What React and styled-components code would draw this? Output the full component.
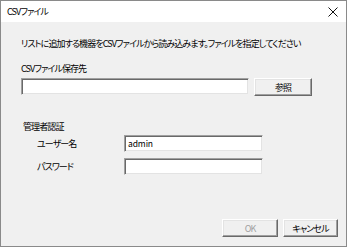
import React from "react";
import styled, { createGlobalStyle } from "styled-components";

const GlobalStyle = createGlobalStyle`
  html, body {
    margin: 0;
    padding: 0;
    background: #f0f0f0;
  }
  * {
    box-sizing: border-box;
  }
`;

const Window = styled.div`
  width: 347px;
  height: 247px;
  display: flex;
  flex-direction: column;
  border: 1px solid #8a8a8a;
  background: #f0f0f0;
  font-family: "Noto Sans CJK JP", "Noto Sans", sans-serif;
  font-size: 9px;
  letter-spacing: -0.9px;
  font-feature-settings: "palt";
  color: #000;
`;

const TitleBar = styled.div`
  height: 21px;
  flex: none;
  display: flex;
  align-items: center;
  justify-content: space-between;
  padding: 0 8px 0 6px;
  background: #fff;
`;

const Title = styled.span`
  line-height: 12px;
`;

const Body = styled.div`
  flex: 1;
  display: flex;
  flex-direction: column;
  padding: 16px 8px 8px 20px;
`;

const Text = styled.div`
  line-height: 12px;
  height: 12px;
  margin-top: ${(p) => p.$top || 0}px;
  margin-left: ${(p) => p.$left || 0}px;
  white-space: nowrap;
`;

const PathRow = styled.div`
  display: flex;
  align-items: flex-start;
  gap: 5px;
  margin-top: 3px;
`;

const Field = styled.div`
  width: ${(p) => p.$width}px;
  height: 17px;
  background: #fff;
  border-style: solid;
  border-width: 1px;
  border-color: #a0a0a0 #f0f0f0 #f0f0f0 #a0a0a0;
  box-shadow: inset 1px 1px 0 #696969, inset -1px -1px 0 #e3e3e3;
  padding: 1px 3px;
  line-height: 13px;
  font-size: 8.5px;
  letter-spacing: -0.1px;
`;

const Button = styled.div`
  width: ${(p) => p.$width}px;
  height: 18px;
  display: flex;
  align-items: center;
  justify-content: center;
  background: #f0f0f0;
  border-style: solid;
  border-width: 1px;
  border-color: #ffffff #696969 #696969 #ffffff;
  box-shadow: inset -1px -1px 0 #a0a0a0, inset 1px 1px 0 #e3e3e3;
  color: ${(p) => (p.$disabled ? "#a0a0a0" : "#000")};
`;

const Group = styled.div`
  display: flex;
  flex-direction: column;
  margin-top: 25px;
`;

const FormRow = styled.div`
  display: flex;
  align-items: center;
  margin-top: ${(p) => p.$top}px;
`;

const RowLabel = styled.div`
  width: 103px;
  padding-left: 16px;
  line-height: 12px;
`;

const Footer = styled.div`
  margin-top: auto;
  display: flex;
  justify-content: flex-end;
  gap: 5px;
  margin-bottom: 1px;
`;

const CloseIcon = () => (
  <svg width="10" height="10" viewBox="0 0 10 10">
    <path d="M0.5 0.5 L9.5 9.5 M9.5 0.5 L0.5 9.5" stroke="#111" strokeWidth="1" fill="none" />
  </svg>
);

export default function App() {
  return (
    <Window>
      <GlobalStyle />
      <TitleBar>
        <Title>CSVファイル</Title>
        <CloseIcon />
      </TitleBar>
      <Body>
        <Text>リストに追加する機器をCSVファイルから読み込みます。ファイルを指定してください</Text>
        <Text $top={13}>CSVファイル保存先</Text>
        <PathRow>
          <Field $width={228} />
          <Button $width={58}>参照</Button>
        </PathRow>
        <Group>
          <Text $left={2}>管理者認証</Text>
          <FormRow $top={2}>
            <RowLabel>ユーザー名</RowLabel>
            <Field $width={139}>admin</Field>
          </FormRow>
          <FormRow $top={6}>
            <RowLabel>パスワード</RowLabel>
            <Field $width={139} />
          </FormRow>
        </Group>
        <Footer>
          <Button $width={56} $disabled>OK</Button>
          <Button $width={55}>キャンセル</Button>
        </Footer>
      </Body>
    </Window>
  );
}
